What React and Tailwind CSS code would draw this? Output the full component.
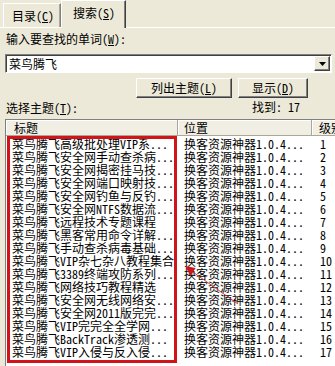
import React from "react";

const rows = [
  "菜鸟腾飞高级批处理VIP系...",
  "菜鸟腾飞安全网手动查杀病...",
  "菜鸟腾飞安全网揭密挂马技...",
  "菜鸟腾飞安全网端口映射技...",
  "菜鸟腾飞安全网钓鱼与反钓...",
  "菜鸟腾飞安全网NTFS数据流...",
  "菜鸟腾飞远程技术专题课程",
  "菜鸟腾飞黑客常用命令详解...",
  "菜鸟腾飞手动查杀病毒基础...",
  "菜鸟腾飞VIP杂七杂八教程集合",
  "菜鸟腾飞3389终端攻防系列...",
  "菜鸟腾飞网络技巧教程精选",
  "菜鸟腾飞安全网无线网络安...",
  "菜鸟腾飞安全网2011版完完...",
  "菜鸟腾飞VIP完完全全学网...",
  "菜鸟腾飞BackTrack渗透测...",
  "菜鸟腾飞VIP入侵与反入侵...",
];

function Btn({ children, w }) {
  return (
    <div
      className={`${w} h-[20px] flex items-center justify-center bg-[#ece9d8] border border-t-white border-l-white border-r-[#404040] border-b-[#404040] shadow-[inset_-1px_-1px_0_#808080]`}
    >
      {children}
    </div>
  );
}

export default function App() {
  return (
    <div className="relative w-[335px] h-[366px] overflow-hidden bg-[#ece9d8] text-[12px] leading-[14px] text-black [font-family:'Noto_Sans_Mono_CJK_SC','Noto_Sans_CJK_SC',monospace]">
      {/* tabs */}
      <div className="flex items-start h-[27px] pl-[3px]">
        <div className="mt-[3px] h-[24px] w-[58px] pl-[8px] pt-[5px] border-t border-l border-white border-r border-r-[#808080] shadow-[inset_-1px_0_0_#aca899]">
          目录(<span className="underline">C</span>)
        </div>
        <div className="relative z-10 h-[28px] w-[65px] pl-[11px] pt-[5px] bg-[#ece9d8] border-t border-l border-white border-r border-r-[#404040] shadow-[inset_-1px_0_0_#808080]">
          搜索(<span className="underline">S</span>)
        </div>
      </div>

      {/* pane */}
      <div className="border-t border-white pl-[5px]">
        <div className="mt-[4px] pl-[1px]">
          输入要查找的单词(<span className="underline">W</span>):
        </div>

        <div className="mt-[8px] h-[19px] w-[327px] flex items-center justify-between bg-white border border-t-[#808080] border-l-[#808080] border-r-white border-b-white shadow-[inset_1px_1px_0_#404040]">
          <span className="pl-[3px]">菜鸟腾飞</span>
          <div className="mr-[1px] w-[16px] h-[15px] flex items-center justify-center bg-[#ece9d8] border border-t-white border-l-white border-r-[#404040] border-b-[#404040] shadow-[inset_-1px_-1px_0_#808080]">
            <svg width="7" height="4" viewBox="0 0 7 4">
              <polygon points="0,0 7,0 3.5,4" fill="#000" />
            </svg>
          </div>
        </div>

        <div className="mt-[5px] flex justify-end gap-[6px] pr-[27px]">
          <Btn w="w-[96px]">
            列出主题(<span className="underline">L</span>)
          </Btn>
          <Btn w="w-[70px]">
            显示(<span className="underline">D</span>)
          </Btn>
        </div>

        <div className="mt-[2px] flex">
          <div className="w-[247px] pl-[1px] pt-[1px]">
            选择主题(<span className="underline">T</span>):
          </div>
          <div>找到: 17</div>
        </div>

        {/* list view */}
        <div className="mt-[4px] w-[340px] h-[260px] bg-white border-t border-l border-[#808080]">
          <div className="flex h-[16px] leading-[15px]">
            <div className="w-[172px] pl-[8px] bg-[#f1efe4] border-r border-b border-[#aca899] shadow-[inset_1px_1px_0_#fff]">
              标题
            </div>
            <div className="w-[134px] pl-[6px] bg-[#f1efe4] border-r border-b border-[#aca899] shadow-[inset_1px_1px_0_#fff]">
              位置
            </div>
            <div className="flex-1 pl-[7px] bg-[#f1efe4] border-b border-[#aca899] shadow-[inset_1px_1px_0_#fff] whitespace-nowrap">
              级别
            </div>
          </div>
          <div className="pt-[1px]">
            {rows.map((t, i) => (
              <div key={i} className="flex h-[13px] leading-[13px] whitespace-nowrap">
                <div className="w-[172px] pl-[6px] overflow-hidden">{t}</div>
                <div className="w-[134px] pl-[6px] overflow-hidden">换客资源神器1.0.4...</div>
                <div className="pl-[8px]">{i + 1}</div>
              </div>
            ))}
          </div>
        </div>
      </div>

      {/* annotation: red rectangle */}
      <div className="absolute left-[7px] top-[136px] w-[170px] h-[227px] border-[3px] border-[#d0141a] pointer-events-none" />
      {/* annotation: arrow */}
      <svg className="absolute left-0 top-0 pointer-events-none" width="335" height="366">
        <line x1="238" y1="304" x2="190" y2="270" stroke="#c83c3c" strokeWidth="1" />
        <polygon points="185,266 195.7,268.1 190.5,275.5" fill="#d0141a" />
      </svg>
    </div>
  );
}
